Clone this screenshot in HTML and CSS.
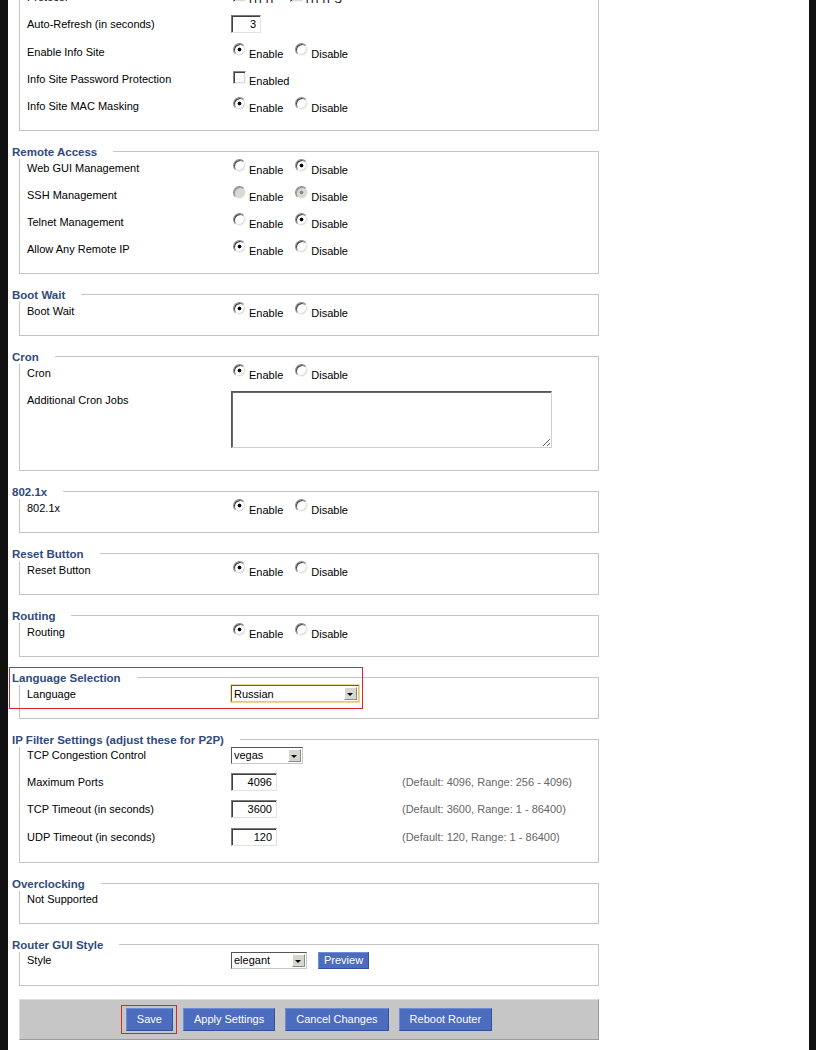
FILE: index.html
```html
<!DOCTYPE html>
<html lang="en">
<head>
    <meta charset="UTF-8">
    <title>Administration - Management</title>
    <link rel="stylesheet" href="styles.css">
</head>
<body>

<div class="page">
<div class="settings">

    <fieldset>
        <legend>Web Access</legend>
        <div class="rows">
            <div class="row">
                <div class="label">Protocol</div>
                <label class="opt"><input type="checkbox" checked><span>HTTP</span></label>
                <label class="opt"><input type="checkbox"><span>HTTPS</span></label>
            </div>
            <div class="row tall">
                <div class="label">Auto-Refresh (in seconds)</div>
                <input class="text short" type="text" value="3">
            </div>
            <div class="row">
                <div class="label">Enable Info Site</div>
                <label class="opt"><input type="radio" name="info" checked><span>Enable</span></label>
                <label class="opt"><input type="radio" name="info"><span>Disable</span></label>
            </div>
            <div class="row">
                <div class="label">Info Site Password Protection</div>
                <label class="opt"><input type="checkbox"><span>Enabled</span></label>
            </div>
            <div class="row">
                <div class="label">Info Site MAC Masking</div>
                <label class="opt"><input type="radio" name="mac" checked><span>Enable</span></label>
                <label class="opt"><input type="radio" name="mac"><span>Disable</span></label>
            </div>
        </div>
    </fieldset>

    <fieldset>
        <legend>Remote Access</legend>
        <div class="rows">
            <div class="row">
                <div class="label">Web GUI Management</div>
                <label class="opt"><input type="radio" name="gui"><span>Enable</span></label>
                <label class="opt"><input type="radio" name="gui" checked><span>Disable</span></label>
            </div>
            <div class="row">
                <div class="label">SSH Management</div>
                <label class="opt"><input type="radio" name="ssh" disabled><span>Enable</span></label>
                <label class="opt"><input type="radio" name="ssh" checked disabled><span>Disable</span></label>
            </div>
            <div class="row">
                <div class="label">Telnet Management</div>
                <label class="opt"><input type="radio" name="telnet"><span>Enable</span></label>
                <label class="opt"><input type="radio" name="telnet" checked><span>Disable</span></label>
            </div>
            <div class="row">
                <div class="label">Allow Any Remote IP</div>
                <label class="opt"><input type="radio" name="anyip" checked><span>Enable</span></label>
                <label class="opt"><input type="radio" name="anyip"><span>Disable</span></label>
            </div>
        </div>
    </fieldset>

    <fieldset>
        <legend>Boot Wait</legend>
        <div class="rows">
            <div class="row">
                <div class="label">Boot Wait</div>
                <label class="opt"><input type="radio" name="bootwait" checked><span>Enable</span></label>
                <label class="opt"><input type="radio" name="bootwait"><span>Disable</span></label>
            </div>
        </div>
    </fieldset>

    <fieldset>
        <legend>Cron</legend>
        <div class="rows">
            <div class="row">
                <div class="label">Cron</div>
                <label class="opt"><input type="radio" name="cron" checked><span>Enable</span></label>
                <label class="opt"><input type="radio" name="cron"><span>Disable</span></label>
            </div>
            <div class="row area">
                <div class="label">Additional Cron Jobs</div>
                <textarea></textarea>
            </div>
        </div>
    </fieldset>

    <fieldset>
        <legend>802.1x</legend>
        <div class="rows">
            <div class="row">
                <div class="label">802.1x</div>
                <label class="opt"><input type="radio" name="dot1x" checked><span>Enable</span></label>
                <label class="opt"><input type="radio" name="dot1x"><span>Disable</span></label>
            </div>
        </div>
    </fieldset>

    <fieldset>
        <legend>Reset Button</legend>
        <div class="rows">
            <div class="row">
                <div class="label">Reset Button</div>
                <label class="opt"><input type="radio" name="reset" checked><span>Enable</span></label>
                <label class="opt"><input type="radio" name="reset"><span>Disable</span></label>
            </div>
        </div>
    </fieldset>

    <fieldset>
        <legend>Routing</legend>
        <div class="rows">
            <div class="row">
                <div class="label">Routing</div>
                <label class="opt"><input type="radio" name="routing" checked><span>Enable</span></label>
                <label class="opt"><input type="radio" name="routing"><span>Disable</span></label>
            </div>
        </div>
    </fieldset>

    <fieldset>
        <legend>Language Selection</legend>
        <div class="rows">
            <div class="row marked">
                <div class="label">Language</div>
                <span class="select focus lang">
                    <select>
                        <option>Russian</option>
                        <option>English</option>
                        <option>German</option>
                    </select>
                </span>
            </div>
        </div>
    </fieldset>

    <fieldset>
        <legend>IP Filter Settings (adjust these for P2P)</legend>
        <div class="rows">
            <div class="row short">
                <div class="label">TCP Congestion Control</div>
                <span class="select tcp">
                    <select>
                        <option>vegas</option>
                        <option>westwood</option>
                        <option>bic</option>
                    </select>
                </span>
            </div>
            <div class="row port">
                <div class="label">Maximum Ports</div>
                <div class="field"><input class="text" type="text" value="4096"></div>
                <span class="hint">(Default: 4096, Range: 256 - 4096)</span>
            </div>
            <div class="row port">
                <div class="label">TCP Timeout (in seconds)</div>
                <div class="field"><input class="text" type="text" value="3600"></div>
                <span class="hint">(Default: 3600, Range: 1 - 86400)</span>
            </div>
            <div class="row port">
                <div class="label">UDP Timeout (in seconds)</div>
                <div class="field"><input class="text" type="text" value="120"></div>
                <span class="hint">(Default: 120, Range: 1 - 86400)</span>
            </div>
        </div>
    </fieldset>

    <fieldset>
        <legend>Overclocking</legend>
        <div class="rows">
            <div class="row short">
                <div class="label">Not Supported</div>
            </div>
        </div>
    </fieldset>

    <fieldset>
        <legend>Router GUI Style</legend>
        <div class="rows">
            <div class="row">
                <div class="label">Style</div>
                <span class="select style">
                    <select>
                        <option>elegant</option>
                        <option>blue</option>
                        <option>red</option>
                    </select>
                </span>
                <button class="btn small" type="button">Preview</button>
            </div>
        </div>
    </fieldset>

    <div class="actions">
        <button class="btn marked" type="button">Save</button>
        <button class="btn" type="button">Apply Settings</button>
        <button class="btn" type="button">Cancel Changes</button>
        <button class="btn" type="button">Reboot Router</button>
    </div>

</div>
</div>

</body>
</html>
```

FILE: styles.css
```css
body {
    margin: 0;
    background-color: #111;
    font-family: "Liberation Sans", Arial, sans-serif;
    font-size: 11px;
    color: #000;
}

.page {
    background-color: #fff;
    margin-left: 8px;
    width: 801px;
    min-height: 1100px;
    overflow: hidden;
}

.settings {
    margin-top: -27px;
}

fieldset {
    box-sizing: border-box;
    width: 580px;
    min-width: 0;
    margin: 0 0 13px 11px;
    padding: 0 0 11px 0;
    border: 1px solid #c4c4c4;
}

legend {
    margin-left: -10px;
    padding: 1px 16px 0 2px;
    background-color: #fff;
    color: #2f4b7c;
    font-weight: bold;
    font-size: 11.5px;
    line-height: 14px;
}

.rows {
    margin-top: -5px;
}

.row {
    display: flex;
    align-items: center;
    height: 27px;
    padding-left: 7px;
}

.row.tall {
    height: 28px;
}

.row.short {
    height: 26px;
}

.row.port {
    height: 27.5px;
}

.row.area {
    height: auto;
    align-items: flex-start;
    padding-top: 5px;
    padding-bottom: 11px;
}

.row.area .label {
    margin-top: 2px;
    line-height: 14px;
}

.label {
    width: 204px;
    flex: none;
}

/* options */
.opt {
    display: inline-flex;
    align-items: center;
    margin-right: 10px;
}

.opt span {
    padding-top: 4px;
}

.opt input {
    appearance: none;
    -webkit-appearance: none;
    box-sizing: border-box;
    width: 13px;
    height: 13px;
    margin: 0 3px 4px 2px;
    background-color: #fff;
    border: 1px solid;
    border-color: #8a8a8a #f4f4f4 #f4f4f4 #8a8a8a;
    box-shadow: inset 1px 1px 0 #404040, inset -1px -1px 0 #dcdad4;
}

.opt input[type="radio"] {
    border-radius: 50%;
}

.opt input[type="radio"]:checked {
    background: radial-gradient(circle, #000 0 1.6px, #fff 2.2px);
}

.opt input[type="radio"]:disabled {
    background-color: #dcd9d2;
    box-shadow: inset 1px 1px 0 #9a9a9a;
}

.opt input[type="radio"]:disabled:checked {
    background: radial-gradient(circle, #8a8a8a 0 1.6px, #dcd9d2 2.2px);
}

.opt input[type="checkbox"] {
    margin-bottom: 2px;
}

.opt input[type="checkbox"]:checked {
    background: linear-gradient(45deg, transparent 45%, #000 45% 55%, transparent 55%), #fff;
}

/* text fields */
.text {
    box-sizing: border-box;
    width: 46px;
    height: 18px;
    margin: 0;
    padding: 0 4px 0 0;
    text-align: right;
    font-family: "Liberation Sans", Arial, sans-serif;
    font-size: 11px;
    border: 1px solid;
    border-color: #7a7a7a #e2e2e2 #e2e2e2 #7a7a7a;
    box-shadow: inset 1px 1px 0 #404040;
}

.text.short {
    width: 30px;
}

textarea {
    box-sizing: border-box;
    width: 321px;
    height: 57px;
    margin: 0;
    border: 1px solid;
    border-color: #555 #cfcfcf #cfcfcf #555;
    box-shadow: inset 1px 1px 0 #6a6a6a;
}

.field {
    width: 171px;
    flex: none;
}

.hint {
    color: #666;
}

/* selects */
.select {
    position: relative;
    display: inline-block;
    line-height: 0;
}

.select select {
    appearance: none;
    -webkit-appearance: none;
    box-sizing: border-box;
    height: 17px;
    margin: 0;
    padding: 0 18px 0 2px;
    font-family: "Liberation Sans", Arial, sans-serif;
    font-size: 11px;
    color: #000;
    background-color: #fff;
    border: 1px solid;
    border-color: #555 #c8c8c8 #c8c8c8 #555;
    border-radius: 0;
}

.select::after {
    content: "";
    position: absolute;
    top: 2px;
    right: 2px;
    width: 13px;
    height: 13px;
    box-sizing: border-box;
    background-color: #d9d6cf;
    border: 1px solid;
    border-color: #fff #8a8a8a #8a8a8a #fff;
    pointer-events: none;
}

.select::before {
    content: "";
    position: absolute;
    top: 8px;
    right: 6px;
    z-index: 1;
    border-left: 3px solid transparent;
    border-right: 3px solid transparent;
    border-top: 3px solid #000;
    pointer-events: none;
}

.select.focus select {
    border-color: #6b5a2e #e6c676 #e6c676 #6b5a2e;
    box-shadow: 0 0 0 1px #efd89a;
}

.select.lang select {
    width: 128px;
}

.select.tcp select {
    width: 72px;
}

.select.style select {
    width: 76px;
}

/* buttons */
.actions {
    box-sizing: border-box;
    width: 580px;
    height: 41px;
    margin-left: 11px;
    background-color: #c6c6c6;
    border: 1px solid;
    border-color: #dedede #9a9a9a #9a9a9a #dedede;
    display: flex;
    justify-content: center;
    align-items: center;
    gap: 10px;
}

.btn {
    height: 23px;
    padding: 0 10px;
    background-color: #4b6cbf;
    color: #fff;
    font-family: "Liberation Sans", Arial, sans-serif;
    font-size: 11px;
    border: 1px solid;
    border-color: #6e8dd6 #34529c #34529c #6e8dd6;
    cursor: pointer;
}

.btn.small {
    height: 17px;
    padding: 0 5px;
    margin-left: 11px;
}

/* red marks */
.btn.marked,
.row.marked {
    position: relative;
}

.btn.marked::after {
    content: "";
    position: absolute;
    top: -4px;
    left: -6px;
    right: -5px;
    bottom: -4px;
    border: 1px solid #d8262a;
    pointer-events: none;
}

.row.marked::after {
    content: "";
    position: absolute;
    top: -13px;
    left: -11px;
    right: 235px;
    bottom: -2px;
    border: 1px solid #d8262a;
    pointer-events: none;
}
```
